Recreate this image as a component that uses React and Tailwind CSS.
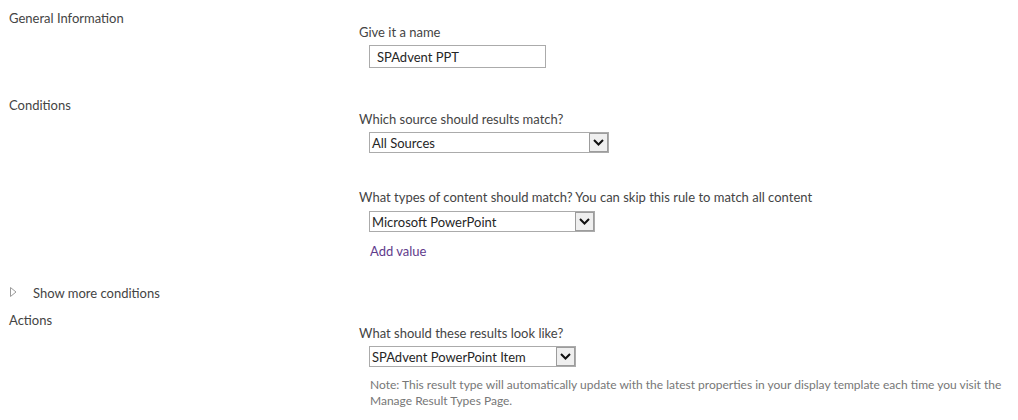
import React from "react";

function Chevron() {
  return (
    <span className="flex h-[19px] w-[19px] items-center justify-center border border-[#9c9c9c] bg-[#efefef]">
      <svg width="11" height="7" viewBox="0 0 11 7">
        <polyline points="1,1 5.5,5.5 10,1" fill="none" stroke="#111" strokeWidth="2" />
      </svg>
    </span>
  );
}

function Select({ text, width }) {
  return (
    <div
      className="ml-[10px] flex h-[21px] items-center justify-between border border-[#ababab] bg-white pl-[2px]"
      style={{ width }}
    >
      <span className="text-[13px] leading-[16px] text-[#262626]">{text}</span>
      <Chevron />
    </div>
  );
}

export default function App() {
  return (
    <div
      className="h-[420px] w-[1018px] overflow-hidden bg-white pt-[10px] text-[13px] leading-[16px] text-[#444]"
      style={{ fontFamily: '"Segoe UI", Lato, "Open Sans", sans-serif' }}
    >
      <div className="flex">
        <div className="w-[359px] shrink-0 pl-[9px]">General Information</div>
        <div className="flex flex-col">
          <div className="mt-[14px]">Give it a name</div>
          <div className="ml-[10px] mt-[5px] flex h-[23px] w-[177px] items-center border border-[#ababab] pl-[7px] text-[#262626]">
            SPAdvent PPT
          </div>
        </div>
      </div>

      <div className="mt-[29px] flex">
        <div className="w-[359px] shrink-0 pl-[9px]">Conditions</div>
        <div className="flex flex-col">
          <div className="mt-[14px]">Which source should results match?</div>
          <div className="mt-[5px]">
            <Select text="All Sources" width="240px" />
          </div>
          <div className="mt-[36px]">
            What types of content should match? You can skip this rule to match all content
          </div>
          <div className="mt-[6px]">
            <Select text="Microsoft PowerPoint" width="226px" />
          </div>
          <div className="ml-[11px] mt-[11px] text-[#5f3b8c]">Add value</div>
        </div>
      </div>

      <div className="mt-[26px] flex items-center pl-[10px]">
        <svg width="7" height="10" viewBox="0 0 7 10" className="mt-[-2px]">
          <polygon points="0.5,0.5 6,5 0.5,9.5" fill="none" stroke="#9a9a9a" strokeWidth="1" />
        </svg>
        <span className="ml-[16px]">Show more conditions</span>
      </div>

      <div className="mt-[11px] flex">
        <div className="w-[359px] shrink-0 pl-[9px]">Actions</div>
        <div className="flex flex-col">
          <div className="mt-[13px]">What should these results look like?</div>
          <div className="mt-[5px]">
            <Select text="SPAdvent PowerPoint Item" width="207px" />
          </div>
          <div className="ml-[11px] mt-[10px] w-[640px] text-[12px] leading-[16px] text-[#777]">
            Note: This result type will automatically update with the latest properties in your
            display template each time you visit the Manage Result Types Page.
          </div>
        </div>
      </div>
    </div>
  );
}
